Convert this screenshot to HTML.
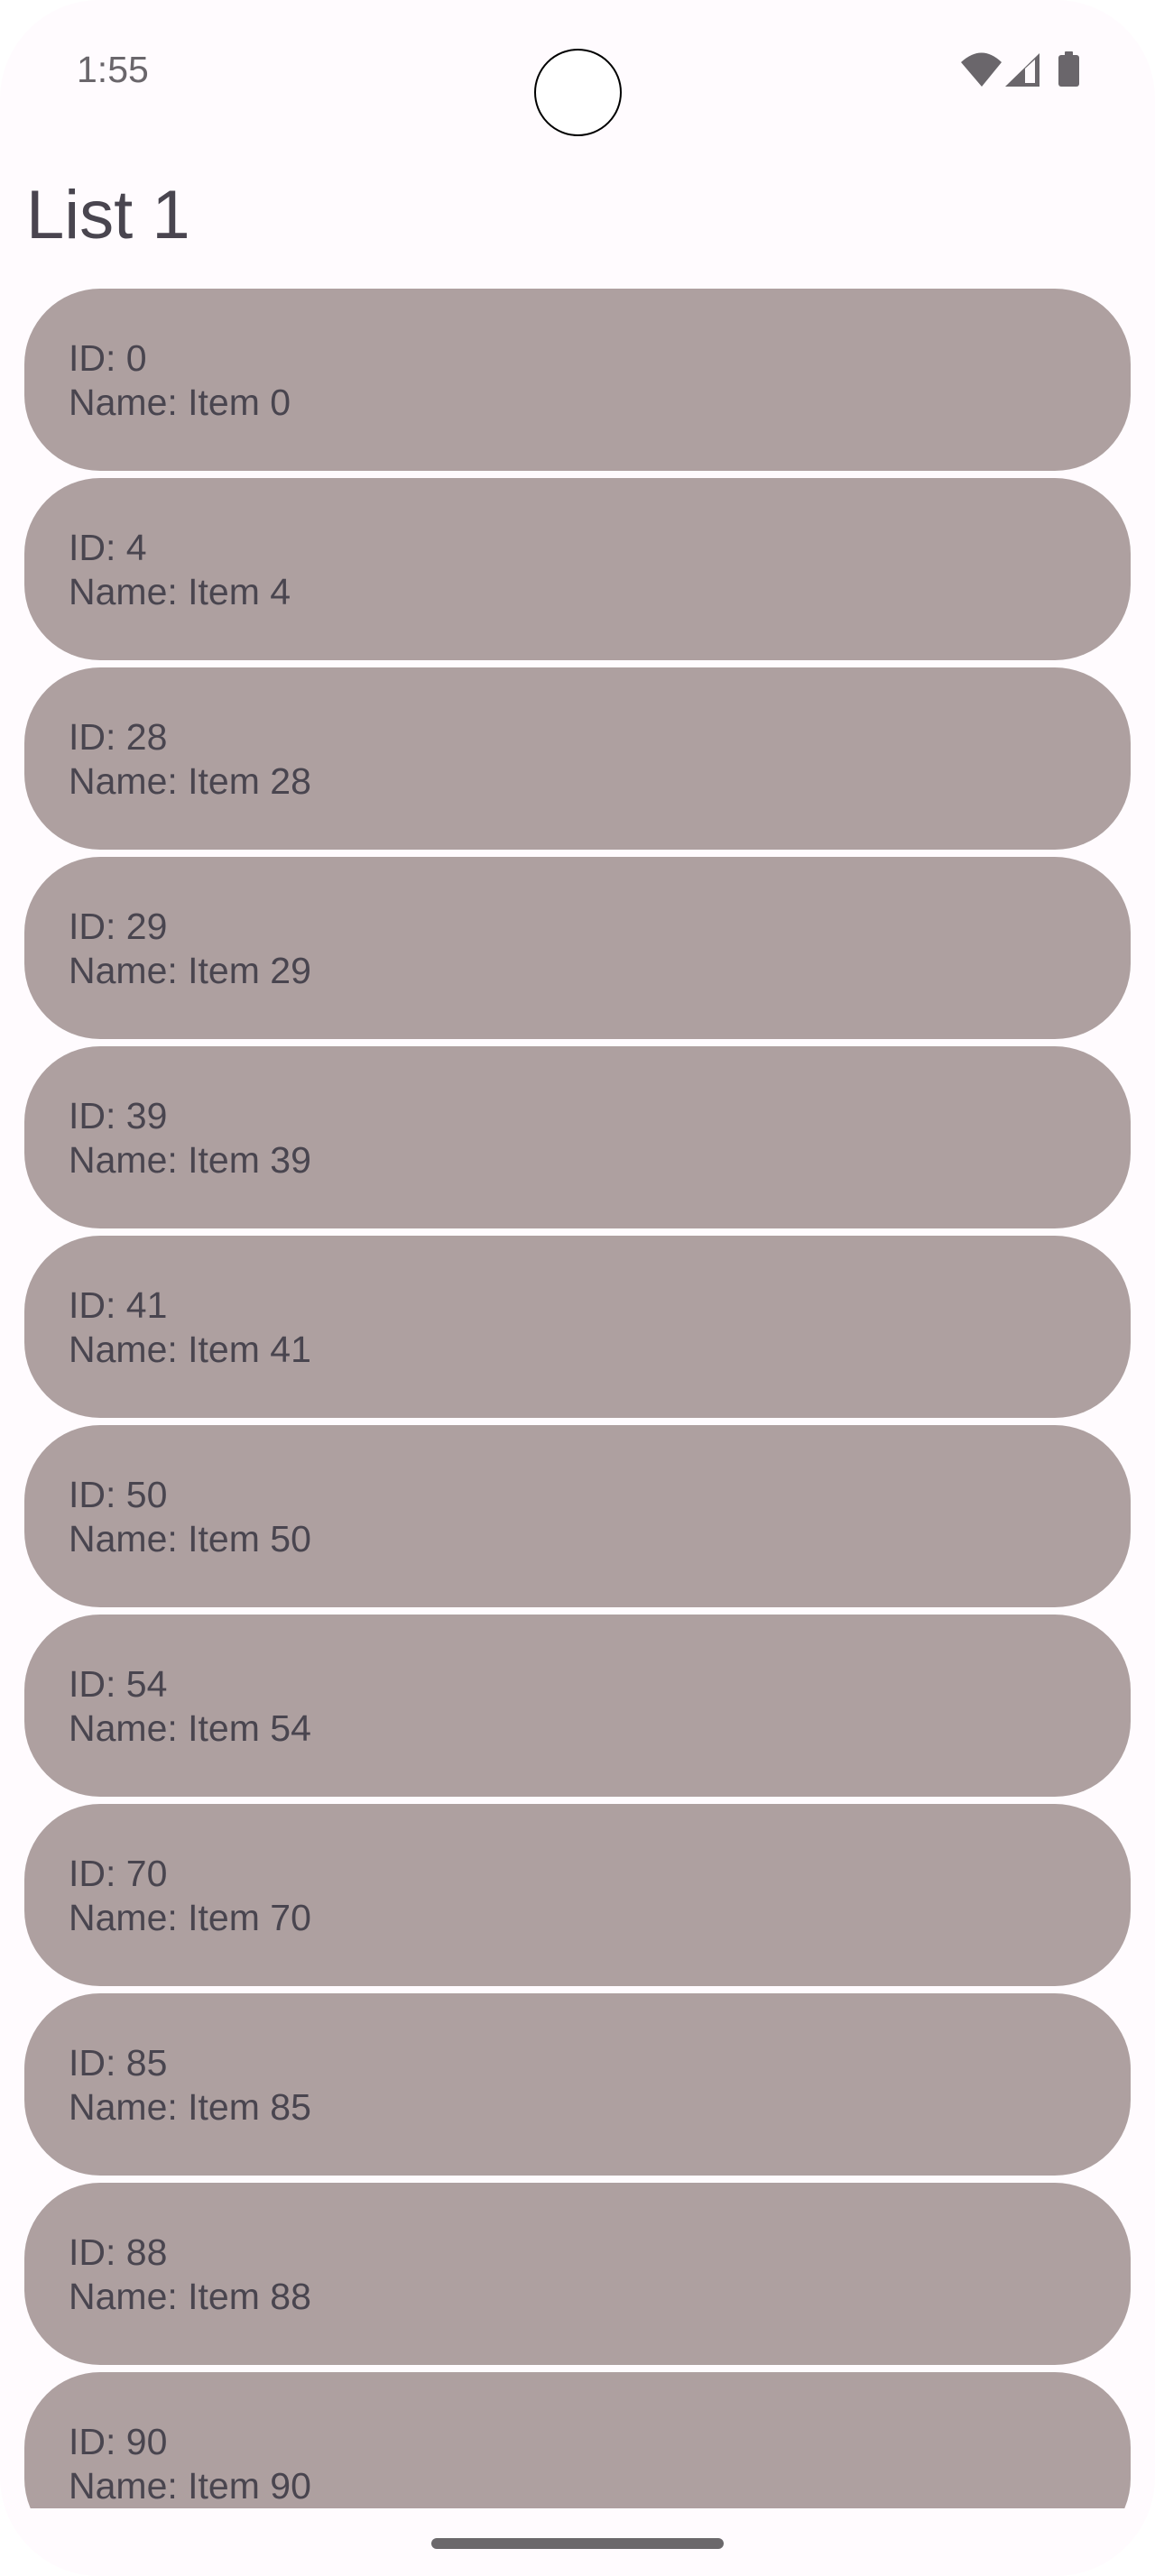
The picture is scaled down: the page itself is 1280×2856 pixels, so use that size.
<!DOCTYPE html>
<html><head><meta charset="utf-8"><style>
html,body{margin:0;padding:0;background:#ffffff;}
body{width:1280px;height:2856px;position:relative;overflow:hidden;font-family:"Liberation Sans",sans-serif;}
#screen{position:absolute;left:0;top:0;width:1280px;height:2856px;background:#fffbfe;border-radius:110px;overflow:hidden;}
.time{position:absolute;left:85px;top:53px;font-size:41px;color:#6a666b;line-height:48px;}
.cam{position:absolute;left:592px;top:54px;width:93px;height:93px;border:2px solid #000;border-radius:50%;background:#fff;}
h1{position:absolute;left:29px;top:194px;margin:0;font-weight:400;font-size:76px;line-height:90px;color:#49454f;}
#list{position:absolute;left:27px;top:320px;width:1226px;height:2461px;overflow:hidden;}
.card{height:202px;margin-bottom:8px;background:#aea0a0;border-radius:84px;box-sizing:border-box;padding:53px 0 0 49px;color:#49454f;font-size:41px;line-height:49px;}
.home{position:absolute;left:478px;top:2814px;width:324px;height:12px;border-radius:6px;background:#6b686b;}
</style></head><body><div id="screen">
<div class="time">1:55</div>
<div class="cam"></div>
<svg style="position:absolute;left:0;top:0" width="1280" height="120">
<path d="M1065 69 Q1088 48 1110 69 L1088 96 Z" fill="#6a666b"/>
<path d="M1114 96 L1152 59 L1152 96 Z" fill="#6a666b"/>
<path d="M1136 76 L1147 66 L1147 92 L1136 92 Z" fill="#fffbfe"/>
<rect x="1180" y="57" width="9" height="6" rx="1" fill="#6a666b"/>
<rect x="1173" y="61" width="23" height="35" rx="3" fill="#6a666b"/>
</svg>
<h1>List 1</h1>
<div id="list">
<div class="card">ID: 0<br>Name: Item 0</div>
<div class="card">ID: 4<br>Name: Item 4</div>
<div class="card">ID: 28<br>Name: Item 28</div>
<div class="card">ID: 29<br>Name: Item 29</div>
<div class="card">ID: 39<br>Name: Item 39</div>
<div class="card">ID: 41<br>Name: Item 41</div>
<div class="card">ID: 50<br>Name: Item 50</div>
<div class="card">ID: 54<br>Name: Item 54</div>
<div class="card">ID: 70<br>Name: Item 70</div>
<div class="card">ID: 85<br>Name: Item 85</div>
<div class="card">ID: 88<br>Name: Item 88</div>
<div class="card">ID: 90<br>Name: Item 90</div>
</div>
<div class="home"></div>
</div></body></html>
